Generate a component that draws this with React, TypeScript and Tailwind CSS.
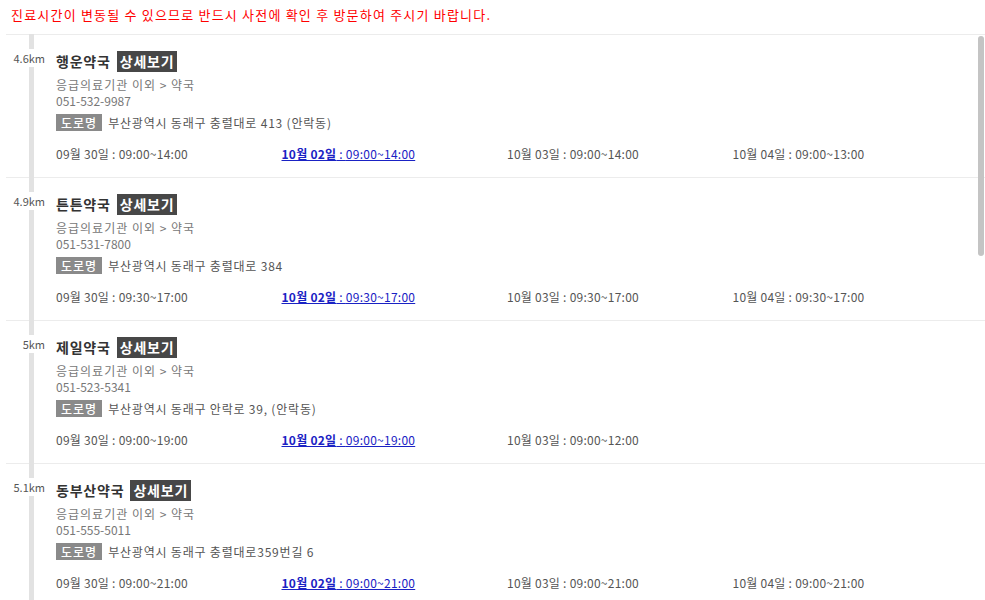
import React from "react";

type Item = {
  dist: string;
  name: string;
  phone: string;
  addr: string;
  hours: string[];
};

const items: Item[] = [
  {
    dist: "4.6km",
    name: "행운약국",
    phone: "051-532-9987",
    addr: "부산광역시 동래구 충렬대로 413 (안락동)",
    hours: ["09:00~14:00", "09:00~14:00", "09:00~14:00", "09:00~13:00"],
  },
  {
    dist: "4.9km",
    name: "튼튼약국",
    phone: "051-531-7800",
    addr: "부산광역시 동래구 충렬대로 384",
    hours: ["09:30~17:00", "09:30~17:00", "09:30~17:00", "09:30~17:00"],
  },
  {
    dist: "5km",
    name: "제일약국",
    phone: "051-523-5341",
    addr: "부산광역시 동래구 안락로 39, (안락동)",
    hours: ["09:00~19:00", "09:00~19:00", "09:00~12:00"],
  },
  {
    dist: "5.1km",
    name: "동부산약국",
    phone: "051-555-5011",
    addr: "부산광역시 동래구 충렬대로359번길 6",
    hours: ["09:00~21:00", "09:00~21:00", "09:00~21:00", "09:00~21:00"],
  },
];

const days = ["09월 30일", "10월 02일", "10월 03일", "10월 04일"];

function Row({ it }: { it: Item }) {
  return (
    <div className="flex h-[143px] border-t border-[#ececec]">
      <div className="w-[50px] shrink-0 pt-[14px] pr-[11px] flex justify-end items-start">
        <span className="relative z-10 bg-white py-[3px] text-[11px] leading-[12px] text-[#555]">
          {it.dist}
        </span>
      </div>
      <div className="pt-[16px]">
        <div className="flex items-center h-[21px] gap-[6px]">
          <span className="text-[14px] font-bold leading-[21px] tracking-[0.8px] text-[#333]">{it.name}</span>
          <span className="bg-[#474747] px-[3px] text-[14px] font-bold leading-[21px] tracking-[0.8px] text-white">
            상세보기
          </span>
        </div>
        <div className="mt-[5px] text-[12px] leading-[16px] tracking-[1px] text-[#777]">응급의료기관 이외 &gt; 약국</div>
        <div className="text-[12px] leading-[16px] text-[#777]">{it.phone}</div>
        <div className="mt-[5px] flex items-center h-[17px] gap-[6px]">
          <span className="bg-[#8a8a8a] px-[5px] text-[12px] leading-[17px] tracking-[1px] font-medium text-white">
            도로명
          </span>
          <span className="text-[12px] leading-[17px] tracking-[0.8px] text-[#555]">{it.addr}</span>
        </div>
        <div className="mt-[15px] grid w-[902px] grid-cols-4 text-[12px] leading-[16px] tracking-[0.25px] text-[#555]">
          {it.hours.map((h, i) =>
            i === 1 ? (
              <span key={i} className="text-[#1a22c4] underline">
                <span className="font-bold">{days[i]}</span> : {h}
              </span>
            ) : (
              <span key={i}>
                {days[i]} : {h}
              </span>
            )
          )}
        </div>
      </div>
    </div>
  );
}

export default function App() {
  return (
    <div
      className="relative h-[600px] w-[985px] overflow-hidden bg-white"
      style={{ fontFamily: '"Noto Sans CJK KR", "Noto Sans", sans-serif' }}
    >
      <p className="h-[34px] pl-[11px] pt-[6px] text-[13px] leading-[18px] tracking-[1.2px] text-[#f00]">
        진료시간이 변동될 수 있으므로 반드시 사전에 확인 후 방문하여 주시기 바랍니다.
      </p>
      <div className="relative ml-[6px]">
        <div className="absolute left-[23px] top-0 bottom-0 w-[5px] bg-[#e2e2e2]" />
        {items.map((it) => (
          <Row key={it.name} it={it} />
        ))}
      </div>
      <div className="absolute left-[978px] top-[36px] h-[220px] w-[6px] rounded-full bg-[#c4c4c4]" />
    </div>
  );
}
